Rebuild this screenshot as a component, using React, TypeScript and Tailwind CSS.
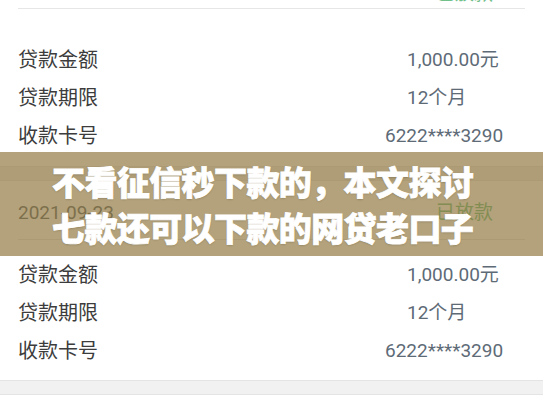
import React from 'react';

type Row = { label: string; value: string; indent: string };

const rows: Row[] = [
    { label: '贷款金额', value: '1,000.00元', indent: 'pl-[389px]' },
    { label: '贷款期限', value: '12个月', indent: 'pl-[389px]' },
    { label: '收款卡号', value: '6222****3290', indent: 'pl-[367px]' },
];

const LoanCard: React.FC<{ header: string; body: string }> = ({ header, body }) => {
    return (
        <div className="bg-white">
            <div className={`mx-[18px] flex justify-between border-b border-[#e6e6e6] ${header}`}>
                <span className="text-[19px] leading-6 text-[#5f6b76]">2021-09-23</span>
                <span className="mr-[32px] text-[19px] leading-6 text-[#72c08a]">已放款</span>
            </div>
            <div className={body}>
                {rows.map((row) => (
                    <div key={row.label} className="flex h-[38px] items-center px-[18px]">
                        <span className="w-0 whitespace-nowrap text-[20px] text-[#3c3c3c]">{row.label}</span>
                        <span className={`whitespace-nowrap text-[19px] text-[#5e6b77] ${row.indent}`}>{row.value}</span>
                    </div>
                ))}
            </div>
        </div>
    );
};

const App: React.FC = () => {
    return (
        <div className="relative h-[408px] w-[543px] overflow-hidden bg-white font-['Roboto','Noto_Sans_CJK_SC',sans-serif]">
            <div className="-mt-[40px]">
                <LoanCard header="h-[49px] items-end pb-[2px]" body="pt-[32px] pb-[11px]" />
                <div className="h-[15px] border-y border-[#e6e6e6] bg-[#f1f1f1]" />
                <LoanCard header="h-[59px] items-center pt-[6px]" body="pt-[16px] pb-[10px]" />
                <div className="h-[15px] border-y border-[#e4e4e4] bg-[#f1f1f1]" />
                <div className="h-[40px] bg-white" />
            </div>

            {/* title banner laid over the list */}
            <div className="absolute left-0 right-0 top-[152px] flex h-[104px] flex-col justify-center bg-[rgba(140,114,55,0.66)] pl-[52px]">
                <p className="whitespace-nowrap font-['Noto_Sans_CJK_SC',sans-serif] text-[33px] font-black leading-[46px] tracking-[-0.6px] text-white [-webkit-text-stroke:0.8px_white] [text-shadow:0_1px_2px_rgba(0,0,0,0.2)]">
                    不看征信秒下款的，本文探讨
                </p>
                <p className="whitespace-nowrap font-['Noto_Sans_CJK_SC',sans-serif] text-[33px] font-black leading-[46px] tracking-[-0.6px] text-white [-webkit-text-stroke:0.8px_white] [text-shadow:0_1px_2px_rgba(0,0,0,0.2)]">
                    七款还可以下款的网贷老口子
                </p>
            </div>
        </div>
    );
};

export default App;
